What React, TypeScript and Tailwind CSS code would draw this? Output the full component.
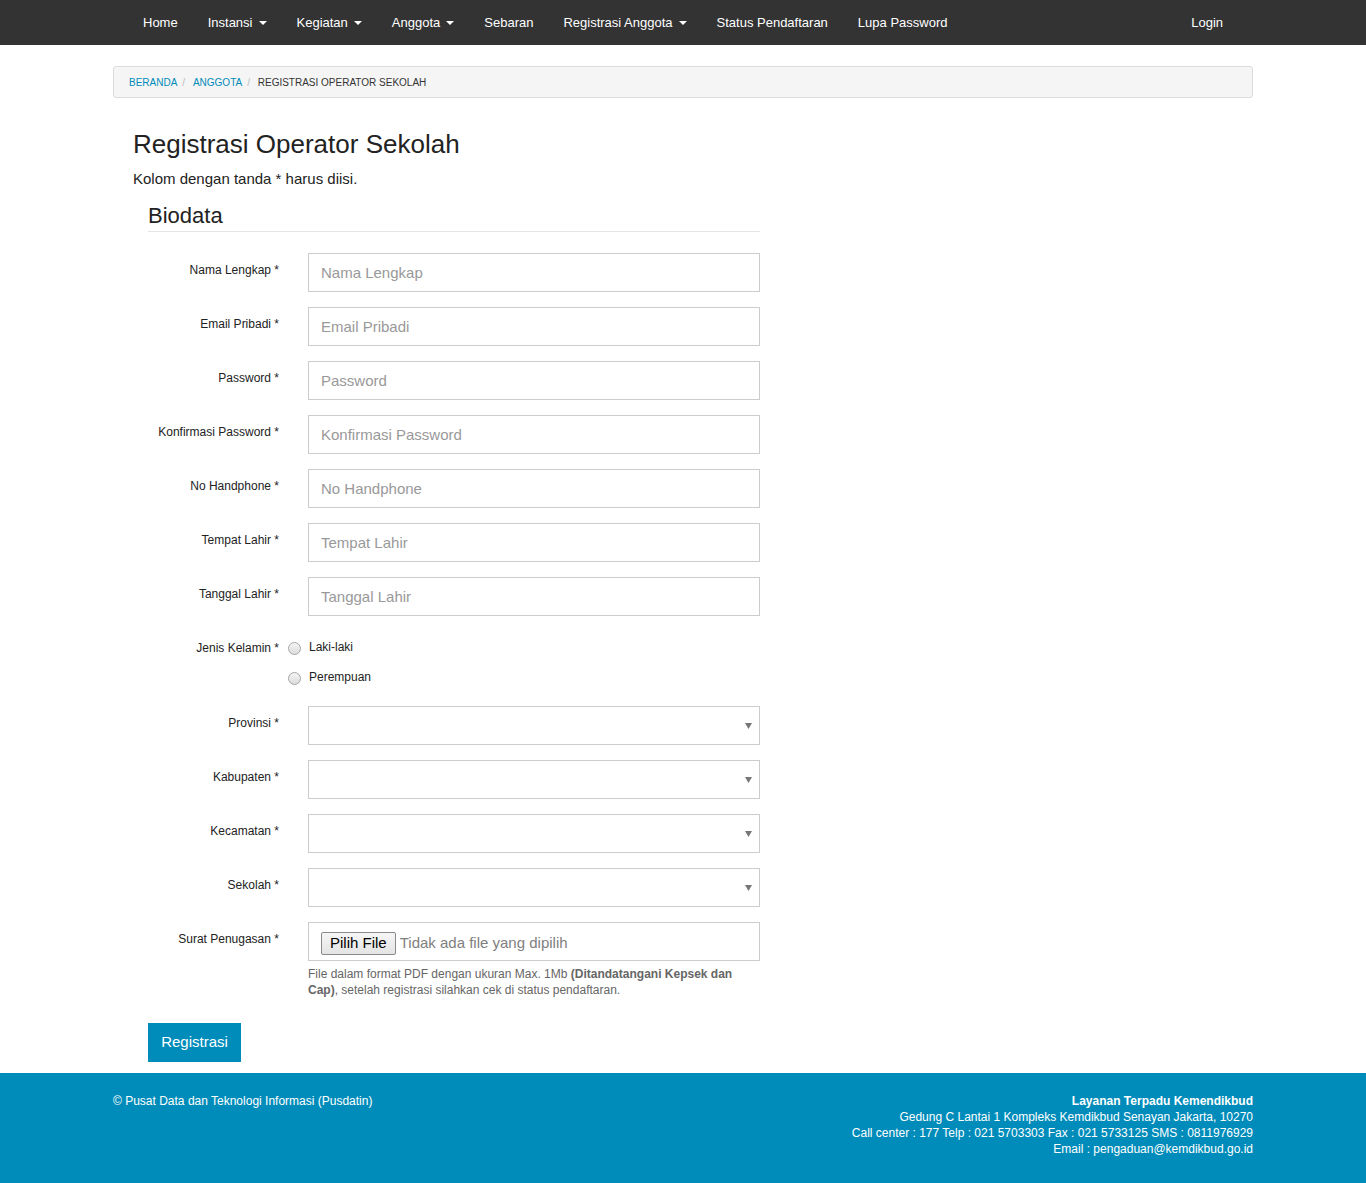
import React from "react";

const navItems: { label: string; caret?: boolean }[] = [
  { label: "Home" },
  { label: "Instansi", caret: true },
  { label: "Kegiatan", caret: true },
  { label: "Anggota", caret: true },
  { label: "Sebaran" },
  { label: "Registrasi Anggota", caret: true },
  { label: "Status Pendaftaran" },
  { label: "Lupa Password" },
];

const textFields = [
  "Nama Lengkap",
  "Email Pribadi",
  "Password",
  "Konfirmasi Password",
  "No Handphone",
  "Tempat Lahir",
  "Tanggal Lahir",
];

const selectFields = ["Provinsi", "Kabupaten", "Kecamatan", "Sekolah"];

function Label({ text }: { text: string }) {
  return (
    <div className="w-[131px] shrink-0 text-right text-[12px] leading-[16px] pt-[9px] text-[#222]">
      {text} *
    </div>
  );
}

function Radio({ label }: { label: string }) {
  return (
    <div className="flex items-center h-[30px]">
      <span className="w-[13px] h-[13px] rounded-full border border-[#a6a6a6] bg-gradient-to-b from-[#f4f4f4] to-[#dcdcdc] mt-[3px]" />
      <span className="ml-[8px] text-[12px] text-[#222]">{label}</span>
    </div>
  );
}

export default function App() {
  return (
    <div className="font-['Liberation_Sans',Arial,sans-serif] text-[#222] bg-white min-h-[1183px] flex flex-col">
      {/* Navbar */}
      <nav className="h-[45px] bg-[#333333] shrink-0">
        <div className="w-[1140px] mx-auto h-full flex items-center justify-between px-[15px]">
          <ul className="flex h-full">
            {navItems.map((it) => (
              <li key={it.label} className="flex items-center px-[15px] text-[13px] text-white h-full">
                <span>{it.label}</span>
                {it.caret && (
                  <span className="ml-[6px] w-0 h-0 border-x-[4px] border-x-transparent border-t-[4px] border-t-white mt-[1px]" />
                )}
              </li>
            ))}
          </ul>
          <div className="px-[15px] text-[13px] text-white">Login</div>
        </div>
      </nav>

      <main className="w-[1140px] mx-auto flex-1">
        {/* Breadcrumb */}
        <div className="mt-[21px] h-[32px] bg-[#f5f5f5] border border-[#dcdcdc] rounded-[3px] flex items-center px-[15px] text-[10px] uppercase">
          <span className="text-[#008cba]">Beranda</span>
          <span className="px-[5px] text-[#bbb]">/{"\u00a0"}</span>
          <span className="text-[#008cba]">Anggota</span>
          <span className="px-[5px] text-[#bbb]">/{"\u00a0"}</span>
          <span className="text-[#333]">Registrasi Operator Sekolah</span>
        </div>

        <div className="px-[20px]">
          <h1 className="mt-[31px] text-[26px] leading-[30px] text-[#222]">Registrasi Operator Sekolah</h1>
          <p className="mt-[10px] text-[15px] leading-[20px] text-[#222]">Kolom dengan tanda * harus diisi.</p>

          <div className="pl-[15px] w-[627px]">
            <h2 className="mt-[14px] text-[22px] leading-[26px] pb-[2px] border-b border-[#e5e5e5] text-[#222]">Biodata</h2>

            <div className="mt-[21px] flex flex-col gap-[15px]">
              {textFields.map((f) => (
                <div key={f} className="flex">
                  <Label text={f} />
                  <input
                    type="text"
                    placeholder={f}
                    className="ml-[29px] w-[452px] h-[39px] border border-[#cccccc] px-[12px] text-[15px] text-[#333] placeholder:text-[#999] outline-none bg-white"
                  />
                </div>
              ))}

              <div className="flex h-[60px]">
                <div className="w-[131px] shrink-0 text-right text-[12px] pt-[2px]">
                  <div className="h-[30px] flex items-center justify-end">Jenis Kelamin *</div>
                </div>
                <div className="ml-[9px] pt-[2px] flex flex-col gap-[1px]">
                  <Radio label="Laki-laki" />
                  <Radio label="Perempuan" />
                </div>
              </div>

              {selectFields.map((f) => (
                <div key={f} className="flex">
                  <Label text={f} />
                  <div className="ml-[29px] w-[452px] h-[39px] border border-[#cccccc] bg-white flex items-center justify-end pr-[7px]">
                    <svg width="7" height="6" viewBox="0 0 7 6">
                      <path d="M0 0 L7 0 L3.5 6 Z" fill="#777" />
                    </svg>
                  </div>
                </div>
              ))}

              <div className="flex">
                <Label text="Surat Penugasan" />
                <div className="ml-[29px] w-[452px]">
                  <div className="h-[39px] border border-[#cccccc] bg-white flex items-center pl-[12px] pt-[3px]">
                    <span className="h-[23px] px-[8px] flex items-center border border-[#8a8a8a] rounded-[2px] bg-gradient-to-b from-[#f6f6f6] to-[#e4e4e4] text-[15px] text-black">
                      Pilih File
                    </span>
                    <span className="ml-[4px] text-[15px] text-[#808080]">Tidak ada file yang dipilih</span>
                  </div>
                  <p className="mt-[5px] text-[12px] leading-[16px] text-[#666]">
                    File dalam format PDF dengan ukuran Max. 1Mb{" "}
                    <b className="font-bold">(Ditandatangani Kepsek dan Cap)</b>, setelah registrasi silahkan cek di status pendaftaran.
                  </p>
                </div>
              </div>
            </div>

            <button className="mt-[25px] w-[93px] h-[39px] bg-[#008cba] text-white text-[15px]">Registrasi</button>
          </div>
        </div>
        <div className="h-[11px]" />
      </main>

      <footer className="bg-[#008cba] h-[110px] shrink-0">
        <div className="w-[1140px] mx-auto flex justify-between pt-[20px] text-white text-[12px] leading-[16px]">
          <div>© Pusat Data dan Teknologi Informasi (Pusdatin)</div>
          <div className="text-right">
            <div className="font-bold">Layanan Terpadu Kemendikbud</div>
            <div>Gedung C Lantai 1 Kompleks Kemdikbud Senayan Jakarta, 10270</div>
            <div>Call center : 177 Telp : 021 5703303 Fax : 021 5733125 SMS : 0811976929</div>
            <div>Email : pengaduan@kemdikbud.go.id</div>
          </div>
        </div>
      </footer>
    </div>
  );
}
